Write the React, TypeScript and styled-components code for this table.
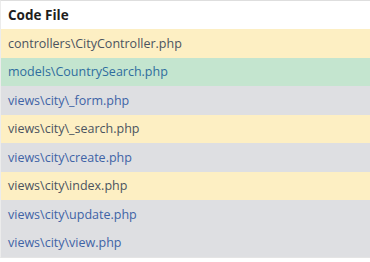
import React from 'react';
import styled, { createGlobalStyle } from 'styled-components';

type FileStatus = 'overwrite' | 'create' | 'same';

type FileRow = {
  path: string,
  status: FileStatus,
}

const files: FileRow[] = [
  { path: 'controllers\\CityController.php', status: 'overwrite' },
  { path: 'models\\CountrySearch.php', status: 'create' },
  { path: 'views\\city\\_form.php', status: 'same' },
  { path: 'views\\city\\_search.php', status: 'overwrite' },
  { path: 'views\\city\\create.php', status: 'same' },
  { path: 'views\\city\\index.php', status: 'overwrite' },
  { path: 'views\\city\\update.php', status: 'same' },
  { path: 'views\\city\\view.php', status: 'same' },
];

const rowBg: Record<FileStatus, string> = {
  overwrite: '#fdefc3',
  create: '#c4e5cf',
  same: '#dedfe2',
};

const rowText: Record<FileStatus, string> = {
  overwrite: '#4b5360',
  create: '#2f6d9e',
  same: '#4063a6',
};

const GlobalStyle = createGlobalStyle`
  html, body {
    margin: 0;
    padding: 0;
    background: #ffffff;
  }
  body {
    font-family: "Open Sans", "DejaVu Sans", sans-serif;
  }
`

const Table = styled.div`
  width: 370px;
  border-top: 1px solid #dedede;
  border-left: 1px solid #ececec;
  border-bottom: 1px solid #e4e4e4;
  box-sizing: border-box;
  display: flex;
  flex-direction: column;
`

const HeaderCell = styled.div`
  height: 28px;
  display: flex;
  align-items: center;
  padding-left: 7px;
  font-size: 13.5px;
  font-weight: 700;
  color: #1e1e1e;
  background: #fff;
`

const Row = styled.div<{ $status: FileStatus }>`
  height: 28.5px;
  display: flex;
  align-items: center;
  padding-left: 7px;
  background: ${p => rowBg[p.$status]};
`

const FileLink = styled.a<{ $status: FileStatus }>`
  font-size: 12.5px;
  color: ${p => rowText[p.$status]};
  text-decoration: none;
`

const App = () => {
  return (
    <>
      <GlobalStyle />
      <Table>
        <HeaderCell>Code File</HeaderCell>
        {files.map(f => (
          <Row key={f.path} $status={f.status}>
            <FileLink href="#" $status={f.status}>{f.path}</FileLink>
          </Row>
        ))}
      </Table>
    </>
  );
};

export default App;
